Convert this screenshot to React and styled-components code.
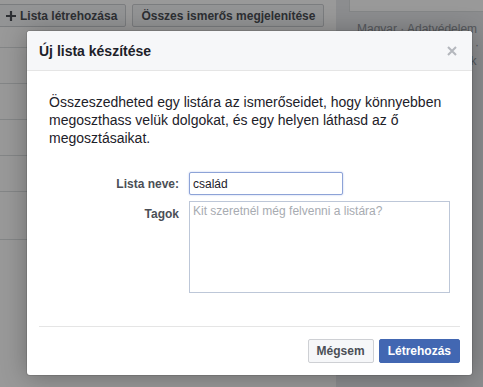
import styled, { createGlobalStyle } from "styled-components";

const GlobalStyle = createGlobalStyle`
  html, body {
    margin: 0;
    padding: 0;
    overflow: hidden;
  }
  body {
    font-family: "Liberation Sans", Arial, Helvetica, sans-serif;
    color: #1d2129;
  }
`;

const Page = styled.div`
  position: relative;
  width: 483px;
  height: 387px;
  display: flex;
  background-color: #e9ebee;
  overflow: hidden;
`;

const LeftPanel = styled.div`
  width: 336px;
  background-color: #ffffff;
  display: flex;
  flex-direction: column;
`;

const Toolbar = styled.div`
  display: flex;
  gap: 6px;
  margin: 4px 0 0 -3px;
`;

const ToolButton = styled.button`
  height: 23px;
  padding: 0 8px;
  display: flex;
  align-items: center;
  gap: 4px;
  background-color: #f6f7f9;
  border: 1px solid #ced0d4;
  border-radius: 2px;
  font-family: inherit;
  font-size: 12px;
  font-weight: bold;
  color: #4b4f56;
  white-space: nowrap;
`;

const Row = styled.div`
  height: ${(p) => p.$h}px;
  border-bottom: 1px solid #dddfe2;
  box-sizing: border-box;
`;

const RightColumn = styled.div`
  flex: 1;
  padding-left: 13px;
`;

const SideCard = styled.div`
  height: 11px;
  background-color: #ffffff;
  border: 1px solid #dddfe2;
  border-top: none;
  border-right: none;
`;

const FooterLinks = styled.div`
  margin-top: 9px;
  padding-left: 8px;
  font-size: 12px;
  line-height: 16px;
  color: #90949c;
`;

const Overlay = styled.div`
  position: absolute;
  inset: 0;
  background-color: rgba(0, 0, 0, 0.4);
  padding: 31px 0 0 27px;
`;

const Dialog = styled.div`
  width: 445px;
  background-color: #ffffff;
  border-radius: 3px;
  box-shadow: 0 2px 26px rgba(0, 0, 0, 0.3), 0 0 0 1px rgba(0, 0, 0, 0.1);
  overflow: hidden;
`;

const Header = styled.div`
  height: 39px;
  display: flex;
  align-items: center;
  justify-content: space-between;
  padding: 0 12px;
  background-color: #f6f7f9;
  border-bottom: 1px solid #e5e5e5;
`;

const Title = styled.h3`
  margin: 0;
  font-size: 14px;
  font-weight: bold;
  color: #1d2129;
`;

const CloseButton = styled.span`
  display: flex;
  margin-right: 3px;
`;

const Body = styled.div`
  padding: 22px 22px 0 22px;
`;

const Intro = styled.p`
  margin: 0;
  font-size: 14px;
  line-height: 18px;
  color: #1d2129;
`;

const Form = styled.div`
  margin-top: 25px;
  display: grid;
  grid-template-columns: 130px 1fr;
  column-gap: 10px;
  row-gap: 6px;
`;

const Label = styled.label`
  font-size: 12px;
  font-weight: bold;
  color: #4b4f56;
  text-align: right;
  padding-top: ${(p) => p.$top}px;
`;

const TextInput = styled.input`
  width: 154px;
  height: 23px;
  box-sizing: border-box;
  padding: 0 3px;
  font-family: inherit;
  font-size: 12px;
  color: #1d2129;
  border: 1px solid #8da3d7;
  box-shadow: 0 0 2px rgba(91, 123, 213, 0.45);
  border-radius: 2px;
  outline: none;
`;

const TextArea = styled.textarea`
  width: 261px;
  height: 92px;
  box-sizing: border-box;
  padding: 2px 3px;
  font-family: inherit;
  font-size: 12px;
  border: 1px solid #bdc7d8;
  resize: none;
  outline: none;
  &::placeholder {
    color: #a7abb1;
  }
`;

const Footer = styled.div`
  margin: 33px 12px 0;
  padding: 12px 0;
  border-top: 1px solid #e5e5e5;
  display: flex;
  justify-content: flex-end;
  gap: 5px;
`;

const DialogButton = styled.button`
  height: 24px;
  padding: 0 8px;
  font-family: inherit;
  font-size: 12px;
  font-weight: bold;
  border-radius: 2px;
  border: 1px solid ${(p) => (p.$primary ? "#4267b2" : "#ced0d4")};
  background-color: ${(p) => (p.$primary ? "#4267b2" : "#f6f7f9")};
  color: ${(p) => (p.$primary ? "#ffffff" : "#4b4f56")};
`;

const PlusIcon = () => (
  <svg width="10" height="10" viewBox="0 0 10 10">
    <path d="M5 0v10M0 5h10" stroke="#4b4f56" strokeWidth="2.2" />
  </svg>
);

const CloseIcon = () => (
  <svg width="10" height="10" viewBox="0 0 10 10">
    <path d="M1 1l8 8M9 1l-8 8" stroke="#b4b7bd" strokeWidth="2" />
  </svg>
);

const rows = [21, 36, 36, 36, 36, 48];

const App = () => {
  return (
    <>
      <GlobalStyle />
      <Page>
        <LeftPanel>
          <Toolbar>
            <ToolButton>
              <PlusIcon />
              Lista létrehozása
            </ToolButton>
            <ToolButton>Összes ismerős megjelenítése</ToolButton>
          </Toolbar>
          {rows.map((h, i) => (
            <Row key={i} $h={h} />
          ))}
        </LeftPanel>
        <RightColumn>
          <SideCard />
          <FooterLinks>
            Magyar · Adatvédelem · Feltételek · Hirdetés · Ad Choices ·
            Cookie-k · Továbbiak
          </FooterLinks>
        </RightColumn>
        <Overlay>
          <Dialog>
            <Header>
              <Title>Új lista készítése</Title>
              <CloseButton>
                <CloseIcon />
              </CloseButton>
            </Header>
            <Body>
              <Intro>
                Összeszedheted egy listára az ismerőseidet, hogy könnyebben
                megoszthass velük dolgokat, és egy helyen láthasd az ő
                megosztásaikat.
              </Intro>
              <Form>
                <Label $top={5}>Lista neve:</Label>
                <TextInput defaultValue="család" />
                <Label $top={6}>Tagok</Label>
                <TextArea placeholder="Kit szeretnél még felvenni a listára?" />
              </Form>
            </Body>
            <Footer>
              <DialogButton>Mégsem</DialogButton>
              <DialogButton $primary>Létrehozás</DialogButton>
            </Footer>
          </Dialog>
        </Overlay>
      </Page>
    </>
  );
};

export default App;
